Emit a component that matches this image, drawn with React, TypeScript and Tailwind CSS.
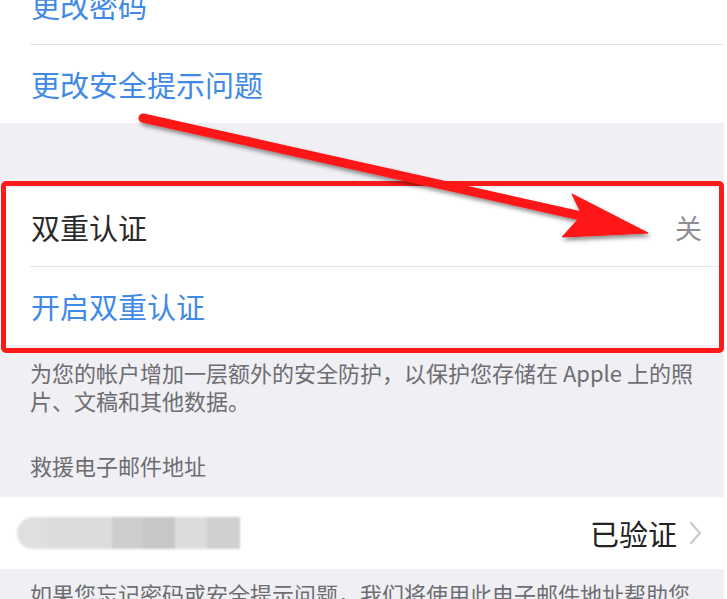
const font = { fontFamily: '"Noto Sans CJK SC", "Noto Sans", sans-serif' };

function Separator() {
  return <div className="ml-[30px] h-px bg-[#e3e3e6]" />;
}

function Row({ children, right }: { children: React.ReactNode; right?: React.ReactNode }) {
  return (
    <div className="flex h-[78px] items-center justify-between pl-[31px] pr-[22px] text-[29px] leading-none">
      {children}
      {right}
    </div>
  );
}

function Annotation() {
  return (
    <>
      <div className="pointer-events-none absolute left-[1px] top-[181px] h-[172px] w-[723px] rounded-[5px] border-[5px] border-[#ff1a1a]" />
      <svg className="pointer-events-none absolute left-0 top-0" width={727} height={599} viewBox="0 0 727 599">
        <defs>
          <filter id="shadow" x="-10%" y="-30%" width="120%" height="160%">
            <feDropShadow dx="2" dy="3" stdDeviation="2" floodColor="#000" floodOpacity="0.45" />
          </filter>
        </defs>
        <g filter="url(#shadow)" fill="#ff1414" stroke="#ff1414">
          <line x1={143} y1={118} x2={590} y2={218} strokeWidth={9} strokeLinecap="round" />
          <polygon points="648,233 562,237 582,215 572,194" strokeWidth={1} strokeLinejoin="round" />
        </g>
      </svg>
    </>
  );
}

export default function App() {
  return (
    <div className="relative h-[599px] w-[727px] overflow-hidden border-r-[3px] border-white bg-[#efeff4]" style={font}>
      {/* account security group */}
      <div className="-mt-[34px] bg-white">
        <Row>
          <span className="text-[#4189e6]">更改密码</span>
        </Row>
        <Separator />
        <Row>
          <span className="text-[#4189e6]">更改安全提示问题</span>
        </Row>
      </div>

      <div className="h-[65px]" />

      {/* two-factor group */}
      <div className="bg-white">
        <Row right={<span className="text-[27px] text-[#8e8e93]">关</span>}>
          <span className="text-[#2a2a2a]">双重认证</span>
        </Row>
        <Separator />
        <Row>
          <span className="text-[#4189e6]">开启双重认证</span>
        </Row>
      </div>

      <div className="px-[30px] pt-[13px] text-[22px] leading-[28px] text-[#6d6d72]">
        <p className="whitespace-nowrap">为您的帐户增加一层额外的安全防护，以保护您存储在 Apple 上的照</p>
        <p>片、文稿和其他数据。</p>
        <p className="mt-[37px]">救援电子邮件地址</p>
      </div>

      {/* rescue email */}
      <div className="mt-[18px] flex h-[72px] items-center justify-between bg-white pl-[17px] pr-[22px]">
        <div className="flex h-[32px] overflow-hidden rounded-l-full opacity-90 blur-[1px]">
          <div className="w-[31px] bg-[#dcdcdc]" />
          <div className="w-[64px] bg-[#d9d9d9]" />
          <div className="w-[31px] bg-[#c9c9c9]" />
          <div className="w-[32px] bg-[#c1c1c1]" />
          <div className="w-[32px] bg-[#d9d9d9]" />
          <div className="w-[33px] bg-[#cbcbcb]" />
        </div>
        <div className="flex items-center gap-[12px]">
          <span className="text-[29px] leading-none text-[#222]">已验证</span>
          <svg width="13" height="24" viewBox="0 0 13 24" fill="none">
            <path d="M2 2l9 10-9 10" stroke="#c7c7cc" strokeWidth="2" strokeLinecap="round" strokeLinejoin="round" />
          </svg>
        </div>
      </div>

      <p className="whitespace-nowrap px-[30px] pt-[10px] text-[22px] leading-[28px] text-[#6d6d72]">
        如果您忘记密码或安全提示问题，我们将使用此电子邮件地址帮助您
      </p>

      <Annotation />
    </div>
  );
}
